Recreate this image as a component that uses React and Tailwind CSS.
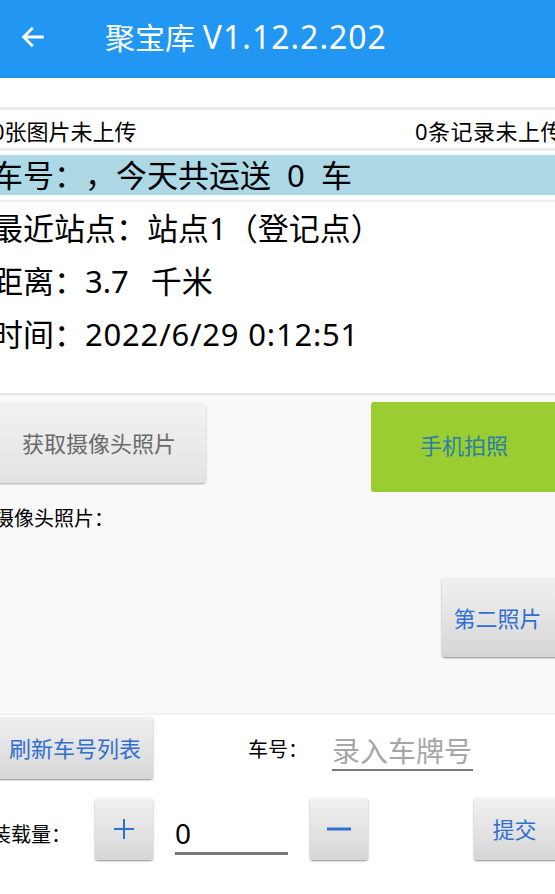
import React from "react";

const FONT = "font-['Noto_Sans','Noto_Sans_CJK_SC',sans-serif] [text-spacing-trim:space-all]";

function GrayButton({ className = "", children }) {
  return (
    <div
      className={`flex items-center justify-center rounded-[3px] bg-gradient-to-b from-[#f1f1f1] to-[#d6d6d6] shadow-[0_1px_2px_rgba(0,0,0,0.45)] ${className}`}
    >
      {children}
    </div>
  );
}

function ArrowBack() {
  return (
    <svg width="28" height="28" viewBox="0 0 24 24" fill="none">
      <path d="M20 12H5M11 5l-7 7 7 7" stroke="white" strokeWidth="2.4" strokeLinecap="square" />
    </svg>
  );
}

export default function App() {
  return (
    <div className={`h-[894px] w-[555px] overflow-hidden bg-white text-black ${FONT}`}>
      {/* title bar */}
      <header className="flex h-[78px] items-center bg-[#2196f3] pb-[4px] text-white">
        <div className="ml-[19px] flex w-[28px] items-center">
          <ArrowBack />
        </div>
        <h1 className="ml-[58px] text-[30px] leading-none">
          聚宝库 <span className="text-[32px] tracking-[1px]">V1.12.2.202</span>
        </h1>
      </header>

      <div className="-mx-[8px]">
        <div className="h-[29px]" />

        {/* upload status */}
        <div className="flex h-[44px] items-center justify-between border-y-[3px] border-[#ececec] pt-[4px] text-[22px] leading-none">
          <span>0张图片未上传</span>
          <span className="tracking-[0.5px]">0条记录未上传</span>
        </div>

        <div className="mt-[4px] flex h-[40px] items-center whitespace-pre bg-[#add8e6] text-[31px] leading-none">
          车号：，今天共运送  0  车
        </div>

        {/* current info */}
        <div className="mt-[5px] border-t-2 border-[#eeeeee] pb-[32px] text-[31px] leading-none">
          <div className="flex h-[53px] items-center whitespace-pre">最近站点：站点1（登记点）</div>
          <div className="flex h-[53px] items-center whitespace-pre">
            距离：3.7<span className="ml-[22px]">千米</span>
          </div>
          <div className="flex h-[53px] items-center whitespace-pre">
            时间：<span className="tracking-[0.8px]">2022/6/29 0:12:51</span>
          </div>
        </div>

        {/* photos */}
        <div className="h-[320px] border-t-2 border-[#e6e6e6] bg-[#f9f9f9]">
          <div className="flex items-start justify-between pt-[7px]">
            <div className="mt-[1px] flex h-[80px] w-[214px] items-center justify-center rounded-[3px] bg-gradient-to-b from-[#f2f2f2] to-[#e3e3e3] text-[22px] leading-none text-[#6a6a6a] shadow-[0_1px_2px_rgba(0,0,0,0.3)]">
              获取摄像头照片
            </div>
            <div className="flex h-[90px] w-[192px] items-center justify-center rounded-[3px] bg-[#9acd32] pb-[4px] pr-[6px] text-[22px] leading-none text-[#2b7fa6]">
              手机拍照
            </div>
          </div>
          <div className="mt-[17px] pl-[2px] text-[20px] leading-none">摄像头照片：</div>
          <div className="mt-[49px] flex justify-end">
            <GrayButton className="h-[79px] w-[121px] pr-[10px] text-[22px] leading-none text-[#2f6fcf]">第二照片</GrayButton>
          </div>
        </div>

        {/* vehicle entry */}
        <div className="border-t-2 border-[#eef2f4] pt-[2px]">
          <div className="flex items-center">
            <GrayButton className="h-[62px] w-[161px] pl-[5px] text-[22px] leading-none text-[#2f6fcf]">刷新车号列表</GrayButton>
            <span className="ml-[95px] w-[60px] pt-[4px] text-[20px] leading-none">车号：</span>
            <div className="ml-[24px] flex h-[46px] w-[141px] items-center border-b-2 border-[#7a7a7a] pt-[8px] text-[28px] leading-none text-[#a6a6a6]">
              录入车牌号
            </div>
          </div>

          <div className="mt-[19px] flex items-start">
            <span className="-ml-[1px] mt-[27px] w-[80px] text-[20px] leading-none">装载量：</span>
            <GrayButton className="ml-[24px] h-[62px] w-[58px]">
              <svg width="22" height="22" viewBox="0 0 22 22">
                <path d="M11 1v20M1 11h20" stroke="#2f6fcf" strokeWidth="2" />
              </svg>
            </GrayButton>
            <div className="ml-[22px] mt-[5px] flex h-[52px] w-[113px] items-end border-b-[3px] border-[#777777] pb-[5px] text-[28px] leading-none">
              0
            </div>
            <GrayButton className="ml-[22px] h-[62px] w-[58px]">
              <svg width="24" height="6" viewBox="0 0 24 6">
                <path d="M0 3h24" stroke="#2f6fcf" strokeWidth="3" />
              </svg>
            </GrayButton>
            <GrayButton className="ml-auto h-[62px] w-[89px] pr-[8px] text-[22px] leading-none text-[#2f6fcf]">提交</GrayButton>
          </div>
        </div>
      </div>
    </div>
  );
}
